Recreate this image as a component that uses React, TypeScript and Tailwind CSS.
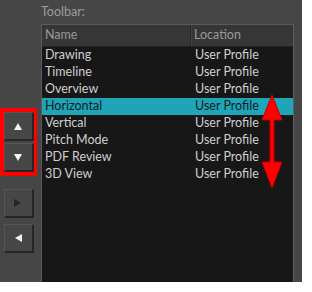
import React from "react";

const ROWS = [
  "Drawing",
  "Timeline",
  "Overview",
  "Horizontal",
  "Vertical",
  "Pitch Mode",
  "PDF Review",
  "3D View",
];
const SELECTED = "Horizontal";

function ArrowButton({ dir, disabled }: { dir: "up" | "down" | "left" | "right"; disabled?: boolean }) {
  const points = {
    up: "4,1 8,8 0,8",
    down: "0,1 8,1 4,8",
    left: "8,0 8,8 1,4",
    right: "0,0 0,8 7,4",
  }[dir];
  return (
    <div className="flex h-[29px] w-[30px] items-center justify-center border-t border-l border-[#555] border-r-2 border-b-2 border-r-[#262626] border-b-[#262626] bg-[#474747]">
      <svg width="9" height="9" viewBox="0 0 9 9">
        <polygon points={points} fill={disabled ? "#262626" : "#f4f4f4"} />
      </svg>
    </div>
  );
}

export default function App() {
  return (
    <div
      className="relative flex h-[282px] w-[302px] bg-[#464646] text-[12.5px] leading-none"
      style={{ fontFamily: 'Lato, "Liberation Sans", sans-serif' }}
    >
      {/* side buttons */}
      <div className="flex w-[41px] flex-col pt-[108px]">
        <div className="flex w-[37px] flex-col border-4 border-[#ff0000]">
          <ArrowButton dir="up" />
          <div className="h-[2px]" />
          <ArrowButton dir="down" />
        </div>
        <div className="mt-[13px] flex flex-col gap-[6px] pl-[4px]">
          <ArrowButton dir="right" disabled />
          <ArrowButton dir="left" />
        </div>
      </div>

      <div className="flex flex-1 flex-col pr-[8px]">
        <div className="h-[24px] pt-[6px] text-[#9c9c9c]">Toolbar:</div>
        <div className="flex flex-1 flex-col border-t border-l border-[#5a5a5a] border-r border-r-[#5e5e5e] bg-[#171717]">
          <div className="flex h-[22px] border-b border-[#222] bg-[#363636] text-[#9a9a9a]">
            <div className="flex w-[149px] items-center border-r border-[#262626] pl-[3px]">Name</div>
            <div className="flex flex-1 items-center border-l border-[#444] pl-[2px]">Location</div>
          </div>
          {ROWS.map((name) => {
            const sel = name === SELECTED;
            return (
              <div
                key={name}
                className={`flex h-[17px] items-center ${sel ? "bg-[#20a4b7] text-[#0c1d22]" : "text-[#cfcfcf]"}`}
              >
                <div className="w-[150px] pl-[3px]">{name}</div>
                <div className="pl-[3px]">User Profile</div>
              </div>
            );
          })}
        </div>
      </div>

      {/* red double arrow annotation */}
      <svg className="absolute left-[261px] top-[94px]" width="22" height="96" viewBox="0 0 22 96">
        <polygon
          points="11,1 21,26 13,26 13,68 21,68 11,94 1,68 9,68 9,26 1,26"
          fill="#ff0000"
          stroke="#c00000"
          strokeWidth="1"
        />
      </svg>
    </div>
  );
}
